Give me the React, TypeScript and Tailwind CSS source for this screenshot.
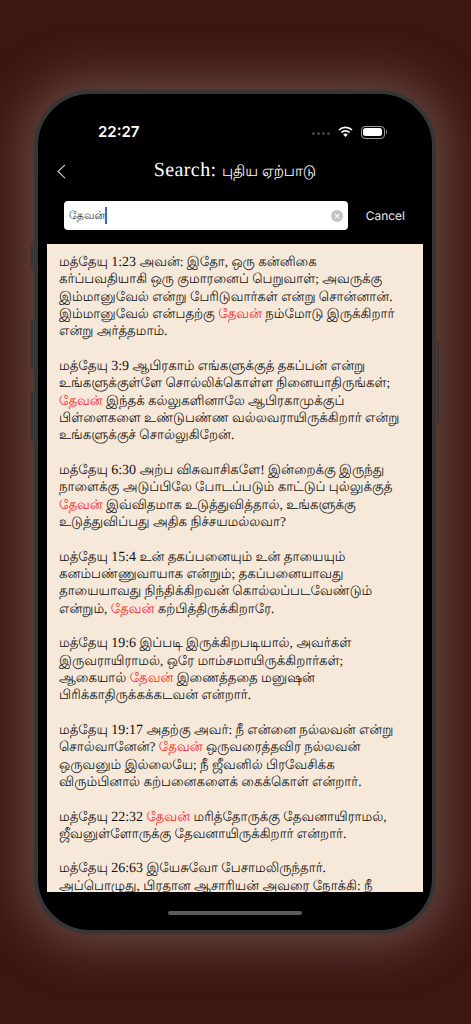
const HL = 'தேவன்';

// each verse is a list of display lines, {HL} marks the highlighted word
const verses = [
  [
    'மத்தேயு 1:23 அவன்: இதோ, ஒரு கன்னிகை',
    'கர்ப்பவதியாகி ஒரு குமாரனைப் பெறுவாள்; அவருக்கு',
    'இம்மானுவேல் என்று பேரிடுவார்கள் என்று சொன்னான்.',
    'இம்மானுவேல் என்பதற்கு {HL} நம்மோடு இருக்கிறார்',
    'என்று அர்த்தமாம்.',
  ],
  [
    'மத்தேயு 3:9 ஆபிரகாம் எங்களுக்குத் தகப்பன் என்று',
    'உங்களுக்குள்ளே சொல்லிக்கொள்ள நினையாதிருங்கள்;',
    '{HL} இந்தக் கல்லுகளினாலே ஆபிரகாமுக்குப்',
    'பிள்ளைகளை உண்டுபண்ண வல்லவராயிருக்கிறார் என்று',
    'உங்களுக்குச் சொல்லுகிறேன்.',
  ],
  [
    'மத்தேயு 6:30 அற்ப விசுவாசிகளே! இன்றைக்கு இருந்து',
    'நாளைக்கு அடுப்பிலே போடப்படும் காட்டுப் புல்லுக்குத்',
    '{HL} இவ்விதமாக உடுத்துவித்தால், உங்களுக்கு',
    'உடுத்துவிப்பது அதிக நிச்சயமல்லவா?',
  ],
  [
    'மத்தேயு 15:4 உன் தகப்பனையும் உன் தாயையும்',
    'கனம்பண்ணுவாயாக என்றும்; தகப்பனையாவது',
    'தாயையாவது நிந்திக்கிறவன் கொல்லப்படவேண்டும்',
    'என்றும், {HL} கற்பித்திருக்கிறாரே.',
  ],
  [
    'மத்தேயு 19:6 இப்படி இருக்கிறபடியால், அவர்கள்',
    'இருவராயிராமல், ஒரே மாம்சமாயிருக்கிறார்கள்;',
    'ஆகையால் {HL} இணைத்ததை மனுஷன்',
    'பிரிக்காதிருக்கக்கடவன் என்றார்.',
  ],
  [
    'மத்தேயு 19:17 அதற்கு அவர்: நீ என்னை நல்லவன் என்று',
    'சொல்வானேன்? {HL} ஒருவரைத்தவிர நல்லவன்',
    'ஒருவனும் இல்லையே; நீ ஜீவனில் பிரவேசிக்க',
    'விரும்பினால் கற்பனைகளைக் கைக்கொள் என்றார்.',
  ],
  [
    'மத்தேயு 22:32 {HL} மரித்தோருக்கு தேவனாயிராமல்,',
    'ஜீவனுள்ளோருக்கு தேவனாயிருக்கிறார் என்றார்.',
  ],
  [
    'மத்தேயு 26:63 இயேசுவோ பேசாமலிருந்தார்.',
    'அப்பொழுது, பிரதான ஆசாரியன் அவரை நோக்கி: நீ',
  ],
];

// verse numbers are larger than the tamil text around them
const withNumbers = (text: string) =>
  text.split(/(\d+:\d+)/).map((part, i) =>
    /^\d+:\d+$/.test(part) ? (
      <span key={i} className="text-[14px]">{part}</span>
    ) : (
      part
    )
  );

const VerseLine = ({ text }: { text: string }) => {
  const parts = text.split('{HL}');
  return (
    <div className="whitespace-nowrap h-[17.33px]">
      {withNumbers(parts[0])}
      {parts.length > 1 && <span className="text-[#fa1e1e]">{HL}</span>}
      {parts[1]}
    </div>
  );
};

const Wifi = () => (
  <svg width="17" height="12" viewBox="0 0 18 13" fill="white">
    <path d="M9 2.4c2.5 0 4.8 1 6.5 2.6l1.2-1.3A11.2 11.2 0 0 0 9 .6 11.2 11.2 0 0 0 1.300 3.700L2.500 5A9.400 9.400 0 0 1 9 2.400Z" />
    <path d="M9 6.200c1.500 0 2.800.6 3.800 1.500l1.300-1.300A7.400 7.400 0 0 0 9 4.400a7.400 7.400 0 0 0-5.100 2l1.300 1.300c1-.9 2.300-1.500 3.800-1.500Z" />
    <path d="M9 8.200c-1 0-1.800.4-2.500 1L9 12l2.500-2.800c-.7-.6-1.500-1-2.500-1Z" />
  </svg>
);

const Battery = () => (
  <div className="flex items-center gap-px">
    <div className="w-[24px] h-[13px] rounded-[4px] border border-[#9a9a9a] p-[1.5px]">
      <div className="w-full h-full rounded-[2.5px] bg-white" />
    </div>
    <div className="w-[1.5px] h-[4px] rounded-r-sm bg-[#8a8a8a]" />
  </div>
);

export default function App() {
  return (
    <div className="h-[1024px] w-[471px] overflow-hidden bg-[#3d1610] pt-[90px] pl-[34px] font-['Liberation_Serif',serif] [text-rendering:geometricPrecision]">
      <div className="relative w-[402px] h-[844px] rounded-[56px] bg-black border-[4px] border-[#363636] shadow-[0_0_48px_12px_rgba(130,105,100,0.6)]">
        {/* side buttons */}
        <div className="absolute -left-[7px] top-[149px] w-[2px] h-[26px] rounded-l-sm bg-[#333]" />
        <div className="absolute -left-[7px] top-[225px] w-[2px] h-[51px] rounded-l-sm bg-[#333]" />
        <div className="absolute -left-[7px] top-[298px] w-[2px] h-[51px] rounded-l-sm bg-[#333]" />
        <div className="absolute -right-[7px] top-[246px] w-[2px] h-[83px] rounded-r-sm bg-[#333]" />

        <div className="flex flex-col h-full overflow-hidden rounded-[52px]">
          {/* status bar */}
          <div className="flex items-center justify-between pt-[26px] pl-[60px] pr-[45px] h-[50px] shrink-0">
            <span className="text-white text-[15px] font-semibold font-['Inter',sans-serif]">22:27</span>
            <div className="flex items-center gap-[7px]">
              <div className="flex gap-[2.5px] mt-[3px]">
                <div className="w-[2.5px] h-[2.5px] rounded-full bg-[#444]" />
                <div className="w-[2.5px] h-[2.5px] rounded-full bg-[#444]" />
                <div className="w-[2.5px] h-[2.5px] rounded-full bg-[#444]" />
                <div className="w-[2.5px] h-[2.5px] rounded-full bg-[#444]" />
              </div>
              <Wifi />
              <Battery />
            </div>
          </div>

          {/* nav */}
          <div className="relative flex items-center justify-center h-[40px] mt-[6px] shrink-0">
            <svg className="absolute left-[19px] top-[14px]" width="9" height="15" viewBox="0 0 9 15" fill="none" stroke="#cfcfcf" strokeWidth="1.1">
              <path d="M8 .8 1 7.500l7 6.700" />
            </svg>
            <span className="text-white text-[20px] tracking-[0.4px] whitespace-nowrap">Search: <span className="text-[15px] tracking-normal">புதிய ஏற்பாடு</span></span>
          </div>

          {/* search */}
          <div className="flex items-center pl-[26px] pr-[27px] mt-[11px] shrink-0">
            <div className="flex items-center w-[284px] h-[29px] rounded-[4px] bg-white pl-[5px] pr-[5px]">
              <span className="text-[#333] text-[11px] font-medium font-['Inter',sans-serif]">{HL}</span>
              <div className="w-[1.5px] h-[17px] bg-[#3a63e0]" />
              <div className="ml-auto w-[12px] h-[12px] rounded-full bg-[#c4c4c4] flex items-center justify-center text-white text-[10px] leading-none font-['Inter',sans-serif]">×</div>
            </div>
            <span className="ml-auto text-[#e8e8e8] text-[12px] font-['Inter',sans-serif]">Cancel</span>
          </div>

          {/* results */}
          <div className="mx-[9px] mt-[14px] h-[648px] shrink-0 overflow-hidden bg-[#f7e9da] pl-[12px] pt-[9px] text-[13.3px] leading-[17.33px] text-[#111]">
            {verses.map((v, i) => (
              <div key={i} className="mb-[17.33px]">
                {v.map((l, j) => (
                  <VerseLine key={j} text={l} />
                ))}
              </div>
            ))}
          </div>

          {/* home indicator */}
          <div className="flex justify-center pt-[19px]">
            <div className="w-[134px] h-[4px] rounded-full bg-[#5c5c5c]" />
          </div>
        </div>
      </div>
    </div>
  );
}
